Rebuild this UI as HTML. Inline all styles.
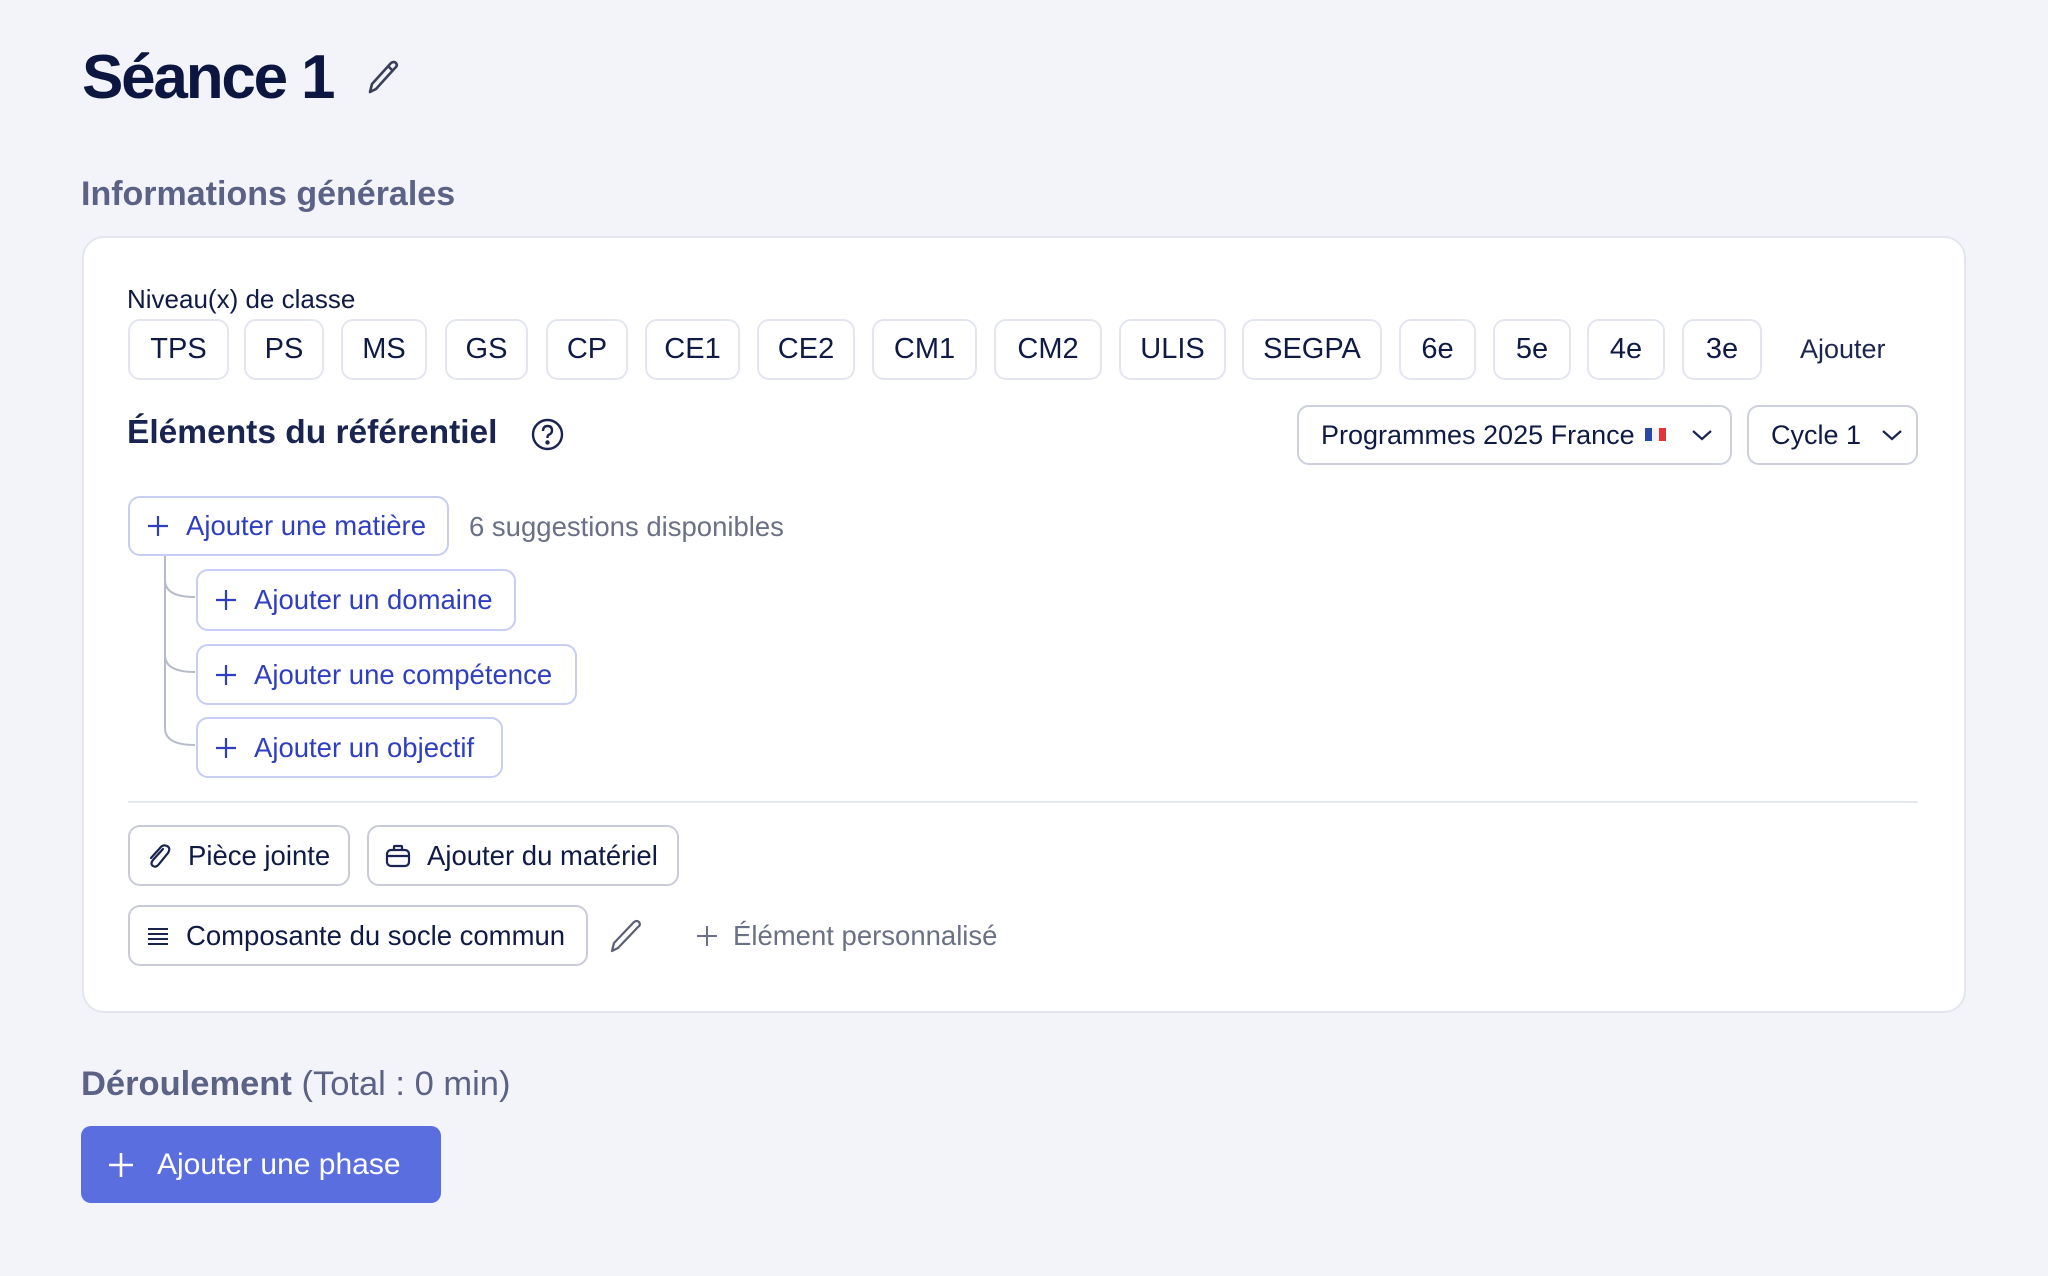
<!DOCTYPE html>
<html><head><meta charset="utf-8"><style>
*{box-sizing:border-box;margin:0;padding:0}
body{width:2048px;height:1276px;background:#f3f4f9;font-family:"Liberation Sans",sans-serif;color:#0f1a45;position:relative;overflow:hidden}
.a{position:absolute}
.chip{position:absolute;top:319px;height:61px;border:2px solid #e3e6ef;border-radius:12px;background:#fff;font-size:29px;display:flex;align-items:center;justify-content:center;color:#0f1a45}
.btn{position:absolute;border:2px solid #c7cdf3;border-radius:12px;background:#fff;font-size:27.5px;color:#2f3fbf;display:flex;align-items:center;padding-left:16px;white-space:nowrap}
.btn2{position:absolute;border:2px solid #c9ccd8;border-radius:12px;background:#fff;font-size:27.5px;color:#0f1a45;display:flex;align-items:center;padding-left:16px;white-space:nowrap}
.plus{width:24px;height:24px;margin-right:16px;flex:none}
.sel{position:absolute;top:405px;height:60px;border:2px solid #cdd1de;border-radius:12px;background:#fff;font-size:27px;display:flex;align-items:center;padding-left:22px;white-space:nowrap}
</style></head><body>
<div class="a" style="left:82px;top:42px;font-size:62px;font-weight:bold;letter-spacing:-2.2px;color:#0d1640">Séance 1</div>
<svg class="a" style="left:364px;top:58px" width="36" height="38" viewBox="0 0 36 38" fill="none" stroke="#3a3f5a" stroke-width="2.6" stroke-linejoin="round"><path d="M6 34 L8 26 L27 5 Q30 3 32 5 Q34 8 31 10 L12 31 Z M24 8 L29 13"/></svg>
<div class="a" style="left:81px;top:175px;font-size:34px;font-weight:bold;color:#5b6286">Informations générales</div>
<div class="a" style="left:82px;top:236px;width:1884px;height:777px;background:#fff;border:2px solid #e3e6ef;border-radius:22px"></div>
<div class="a" style="left:127px;top:284px;font-size:26px;color:#0f1a45">Niveau(x) de classe</div>
<div class="chip" style="left:128px;width:101px">TPS</div>
<div class="chip" style="left:244px;width:80px">PS</div>
<div class="chip" style="left:341px;width:86px">MS</div>
<div class="chip" style="left:445px;width:83px">GS</div>
<div class="chip" style="left:546px;width:82px">CP</div>
<div class="chip" style="left:645px;width:95px">CE1</div>
<div class="chip" style="left:757px;width:98px">CE2</div>
<div class="chip" style="left:872px;width:105px">CM1</div>
<div class="chip" style="left:994px;width:108px">CM2</div>
<div class="chip" style="left:1119px;width:107px">ULIS</div>
<div class="chip" style="left:1242px;width:140px">SEGPA</div>
<div class="chip" style="left:1399px;width:77px">6e</div>
<div class="chip" style="left:1493px;width:78px">5e</div>
<div class="chip" style="left:1587px;width:78px">4e</div>
<div class="chip" style="left:1682px;width:80px">3e</div>
<div class="a" style="left:1800px;top:334px;font-size:27px;color:#1c2550">Ajouter</div>
<div class="a" style="left:127px;top:414px;font-size:33.5px;font-weight:bold;color:#1a2450">Éléments du référentiel</div>
<svg class="a" style="left:531px;top:418px" width="33" height="33" viewBox="0 0 33 33" fill="none" stroke="#1a2450" stroke-width="2.4"><circle cx="16.5" cy="16.5" r="14.5"/><path d="M12 13 Q12 8 16.5 8 Q21 8 21 12.5 Q21 15.5 17.5 17 Q16.5 17.5 16.5 20"/><circle cx="16.5" cy="24.5" r="1" fill="#1a2450"/></svg>
<div class="sel" style="left:1297px;width:435px">Programmes 2025 France
<svg style="margin-left:10px" width="22" height="18" viewBox="0 0 22 18"><rect x="0" y="2" width="7" height="13" fill="#2b45a8"/><rect x="7" y="2" width="7" height="13" fill="#f3f3f3"/><rect x="14" y="2" width="7" height="13" fill="#e2323c"/></svg>
<svg style="margin-left:24px" width="22" height="14" viewBox="0 0 22 14" fill="none" stroke="#1a2450" stroke-width="2.2"><path d="M2 3 L11 11 L20 3"/></svg></div>
<div class="sel" style="left:1747px;width:171px">Cycle 1
<svg style="margin-left:20px" width="22" height="14" viewBox="0 0 22 14" fill="none" stroke="#1a2450" stroke-width="2.2"><path d="M2 3 L11 11 L20 3"/></svg></div>

<svg class="a" style="left:150px;top:550px" width="60" height="200" viewBox="0 0 60 200" fill="none" stroke="#b5bbc9" stroke-width="2"><path d="M15 0 V30 Q15 47 45 47 M15 30 V105 Q15 122 45 122 M15 105 V178 Q15 195 45 195"/></svg>
<div class="btn" style="left:128px;top:496px;width:321px;height:60px"><svg class="plus" viewBox="0 0 24 24" stroke="#2f3fbf" stroke-width="2.2"><path d="M12 2V22M2 12H22"/></svg>Ajouter une matière</div>
<div class="a" style="left:469px;top:511px;font-size:27.5px;color:#6a7085">6 suggestions disponibles</div>
<div class="btn" style="left:196px;top:569px;width:320px;height:62px"><svg class="plus" viewBox="0 0 24 24" stroke="#2f3fbf" stroke-width="2.2"><path d="M12 2V22M2 12H22"/></svg>Ajouter un domaine</div>
<div class="btn" style="left:196px;top:644px;width:381px;height:61px"><svg class="plus" viewBox="0 0 24 24" stroke="#2f3fbf" stroke-width="2.2"><path d="M12 2V22M2 12H22"/></svg>Ajouter une compétence</div>
<div class="btn" style="left:196px;top:717px;width:307px;height:61px"><svg class="plus" viewBox="0 0 24 24" stroke="#2f3fbf" stroke-width="2.2"><path d="M12 2V22M2 12H22"/></svg>Ajouter un objectif</div>
<div class="a" style="left:128px;top:801px;width:1790px;height:2px;background:#e6e8ef"></div>
<div class="btn2" style="left:128px;top:825px;width:222px;height:61px"><svg class="plus" style="width:26px;height:28px" viewBox="0 0 26 28" fill="none" stroke="#1a2450" stroke-width="2.2" stroke-linecap="round"><path d="M17 7 L7 18 Q4 22 7 24 Q10 26 13 22 L22 11 Q25 6 21 4 Q17 2 14 6 L5 16"/></svg>Pièce jointe</div>
<div class="btn2" style="left:367px;top:825px;width:312px;height:61px"><svg class="plus" style="width:26px;height:26px" viewBox="0 0 26 26" fill="none" stroke="#1a2450" stroke-width="2.2"><rect x="2" y="7" width="22" height="16" rx="4"/><path d="M9 7 V4 Q9 3 10 3 H16 Q17 3 17 4 V7 M2 13 H24"/></svg>Ajouter du matériel</div>
<div class="btn2" style="left:128px;top:905px;width:460px;height:61px"><svg class="plus" viewBox="0 0 24 24" stroke="#1a2450" stroke-width="2"><path d="M2 5H22M2 10H22M2 15H22M2 20H22"/></svg>Composante du socle commun</div>
<svg class="a" style="left:608px;top:918px" width="36" height="36" viewBox="0 0 36 36" fill="none" stroke="#5a5f75" stroke-width="2.2" stroke-linejoin="round"><path d="M4 33 L6 25 L26 4 Q29 2 31 4 Q33 7 30 9 L10 30 Z"/></svg>
<svg class="a" style="left:696px;top:925px" width="22" height="22" viewBox="0 0 22 22" stroke="#6a7085" stroke-width="2"><path d="M11 1V21M1 11H21"/></svg>
<div class="a" style="left:733px;top:920px;font-size:27.5px;color:#6a7085">Élément personnalisé</div>
<div class="a" style="left:81px;top:1065px;font-size:34.5px;color:#5b6286"><b>Déroulement</b> (Total : 0 min)</div>
<div class="a" style="left:81px;top:1126px;width:360px;height:77px;background:#5a6ee0;border-radius:10px;color:#fff;font-size:30px;display:flex;align-items:center;padding-left:26px"><svg style="margin-right:22px" width="28" height="28" viewBox="0 0 28 28" stroke="#fff" stroke-width="2.6"><path d="M14 2V26M2 14H26"/></svg>Ajouter une phase</div>
</body></html>
